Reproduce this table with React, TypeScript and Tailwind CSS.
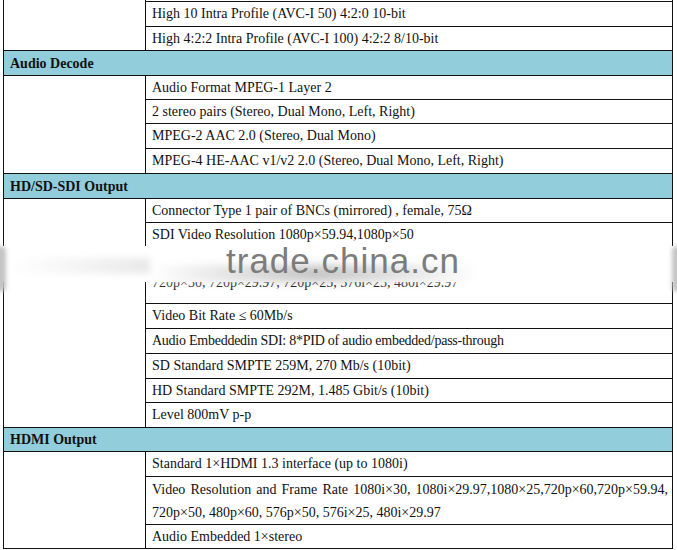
import React from "react";

function Cell({ h, children, top }: { h: string; children?: React.ReactNode; top?: boolean }) {
  return (
    <div
      className={`${h} ${top ? "border-t" : ""} flex items-center whitespace-nowrap border-b border-[#111] pl-[6px] leading-[24px]`}
    >
      {children}
    </div>
  );
}

function Header({ h, children }: { h: string; children: React.ReactNode }) {
  return (
    <div className={`${h} flex items-center border-b border-[#111] bg-[#92cddc] pl-[6px] font-bold`}>
      {children}
    </div>
  );
}

function Body({ children, pad }: { children: React.ReactNode; pad?: boolean }) {
  return (
    <div className="flex">
      <div className="w-[142px] shrink-0 border-r border-b border-[#111]" />
      <div className={`flex flex-1 flex-col ${pad ? "pt-[1px]" : ""}`}>{children}</div>
    </div>
  );
}

export default function App() {
  return (
    <div className="relative h-[550px] w-[677px] overflow-hidden bg-white font-['Liberation_Serif',serif] text-[14px] text-[#111]">
      <div className="ml-[3px] w-[670px] border-x border-[#111]">
        <Body pad>
          <Cell h="h-[26px]" top>
            High 10 Intra Profile (AVC-I 50) 4:2:0 10-bit
          </Cell>
          <Cell h="h-[24px]">High 4:2:2 Intra Profile (AVC-I 100) 4:2:2 8/10-bit</Cell>
        </Body>
        <Header h="h-[25px]">Audio Decode</Header>
        <Body>
          <Cell h="h-[24px]">Audio Format MPEG-1 Layer 2</Cell>
          <Cell h="h-[24px]">2 stereo pairs (Stereo, Dual Mono, Left, Right)</Cell>
          <Cell h="h-[25px]">MPEG-2 AAC 2.0 (Stereo, Dual Mono)</Cell>
          <Cell h="h-[25px]">MPEG-4 HE-AAC v1/v2 2.0 (Stereo, Dual Mono, Left, Right)</Cell>
        </Body>
        <Header h="h-[25px]">HD/SD-SDI Output</Header>
        <Body>
          <Cell h="h-[24px]">Connector Type 1 pair of BNCs (mirrored) , female, 75Ω</Cell>
          <div className="flex h-[81px] flex-col whitespace-nowrap border-b border-[#111] pl-[6px] leading-[24px]">
            <div>SDI Video Resolution 1080p×59.94,1080p×50</div>
            <div>&nbsp;</div>
            <div>720p×30, 720p×29.97, 720p×25, 576i×25, 480i×29.97</div>
          </div>
          <Cell h="h-[25px]">Video Bit Rate ≤ 60Mb/s</Cell>
          <Cell h="h-[25px]">
            <span className="tracking-[-0.25px]">Audio Embeddedin SDI: 8*PID of audio embedded/pass-through</span>
          </Cell>
          <Cell h="h-[25px]">SD Standard SMPTE 259M, 270 Mb/s (10bit)</Cell>
          <Cell h="h-[24px]">HD Standard SMPTE 292M, 1.485 Gbit/s (10bit)</Cell>
          <Cell h="h-[25px]">Level 800mV p-p</Cell>
        </Body>
        <Header h="h-[24px]">HDMI Output</Header>
        <Body>
          <Cell h="h-[25px]">Standard 1×HDMI 1.3 interface (up to 1080i)</Cell>
          <div className="flex h-[48px] flex-col justify-center border-b border-[#111] pl-[6px] pr-[4px] leading-[23px]">
            <div className="whitespace-nowrap text-justify [text-align-last:justify]">
              Video Resolution and Frame Rate 1080i×30, 1080i×29.97,1080×25,720p×60,720p×59.94,
            </div>
            <div className="whitespace-nowrap">720p×50, 480p×60, 576p×50, 576i×25, 480i×29.97</div>
          </div>
          <Cell h="h-[24px]">Audio Embedded 1×stereo</Cell>
        </Body>
      </div>

      {/* watermark */}
      <div className="pointer-events-none absolute left-0 top-[246px] h-[36px] w-[677px] bg-white" />
      <div className="pointer-events-none absolute left-[150px] top-[265px] h-[17px] w-[330px] bg-gradient-to-r from-white via-[#b8b8b8] to-white opacity-80 blur-[4px]" />
      <div className="pointer-events-none absolute left-[10px] top-[258px] h-[16px] w-[140px] bg-gradient-to-r from-white to-[#e0e0e0] opacity-70 blur-[3px]" />
      <div className="pointer-events-none absolute left-[-4px] top-[246px] h-[46px] w-[10px] rounded-full bg-[#c4c4c4] blur-[2px]" />
      <div className="pointer-events-none absolute left-[672px] top-[246px] h-[46px] w-[10px] rounded-full bg-[#c4c4c4] blur-[2px]" />
      <div className="pointer-events-none absolute left-[226px] top-[241px] font-['Liberation_Sans',sans-serif] text-[35px] leading-[40px] tracking-[1px] text-[#7c7c7c]">
        trade.china.cn
      </div>
    </div>
  );
}
